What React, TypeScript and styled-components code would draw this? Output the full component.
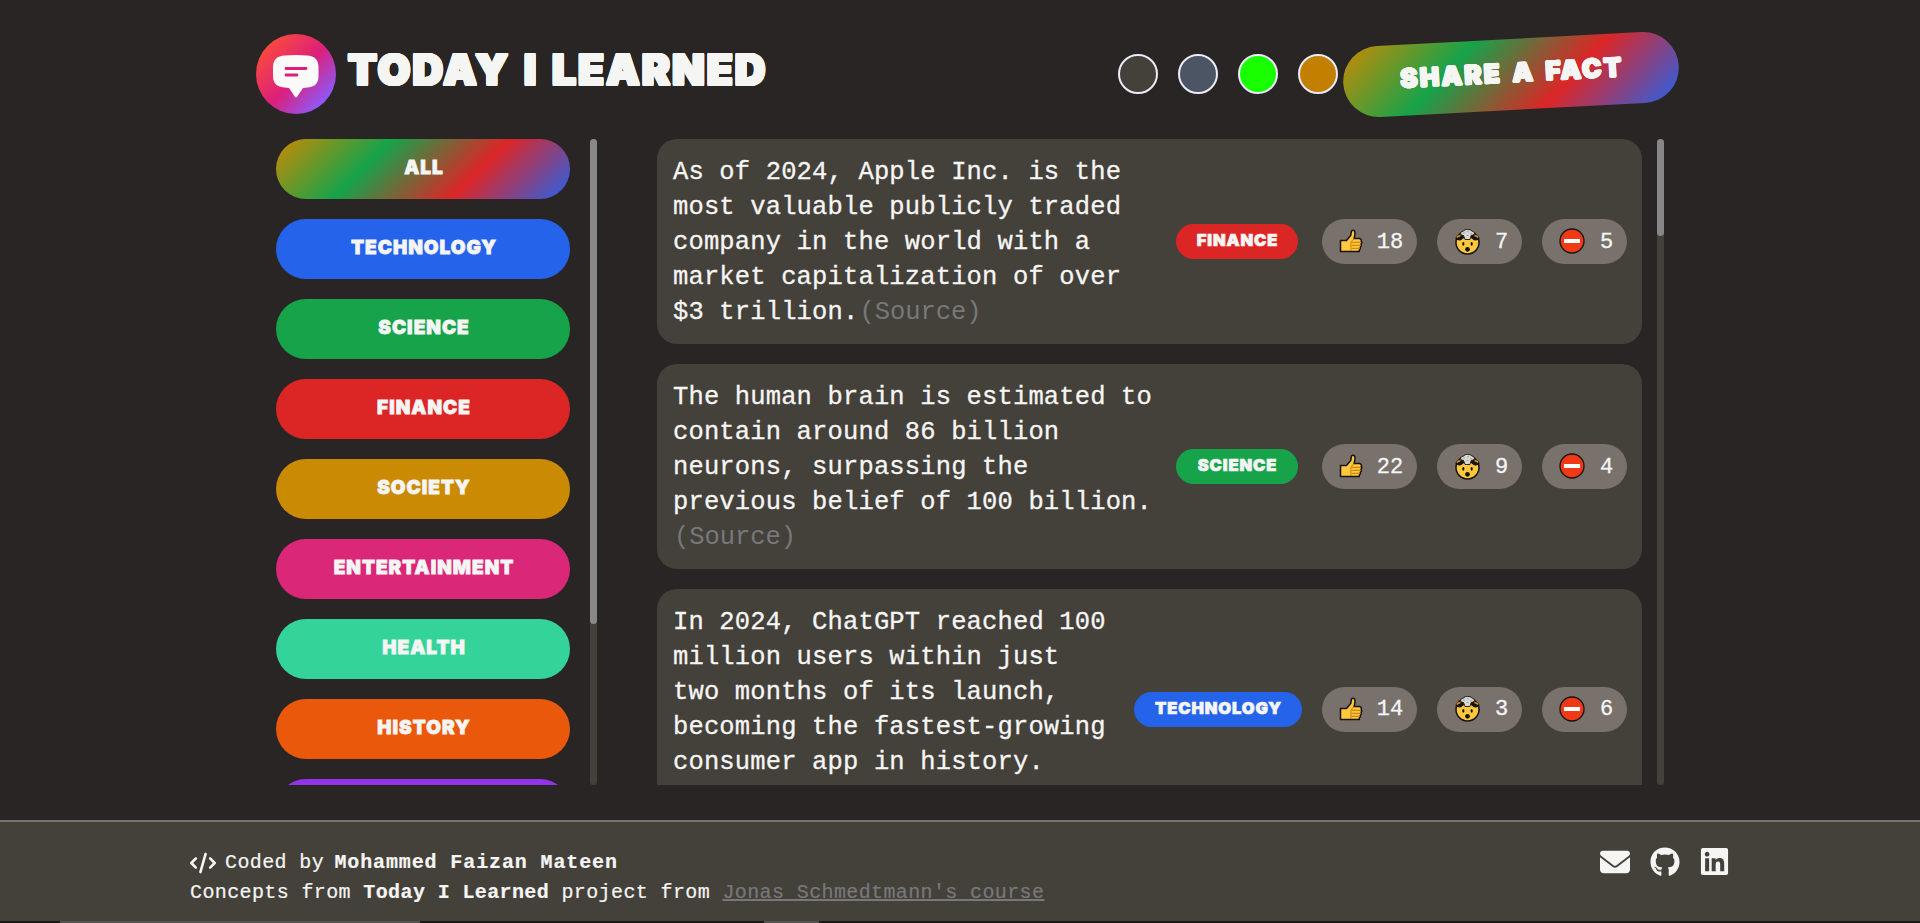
import React from 'react';
import styled, { createGlobalStyle, css } from 'styled-components';
import { FaEnvelope, FaGithub, FaLinkedin, FaCode } from 'react-icons/fa6';

const rainbow = 'linear-gradient(135deg, #ca8a04, #16a34a 33%, #dc2626 66%, #2563eb)';

const GlobalStyle = createGlobalStyle`
  * { box-sizing: border-box; margin: 0; padding: 0; }
  body {
    background: #292524;
    color: #f5f5f4;
    font-family: 'Liberation Mono', monospace;
    overflow: hidden;
  }
  button { border: 0; color: inherit; font: inherit; }
`;

/* Rounded outline that fattens the display lettering. */
const fatten = (r: number) =>
  Array.from({ length: 16 }, (_, i) => {
    const a = (i * Math.PI) / 8;
    return `${(r * Math.cos(a)).toFixed(2)}px ${(r * Math.sin(a)).toFixed(2)}px 0 #f5f5f4`;
  }).join(', ');

const display = css`
  font-family: Inter, 'Liberation Sans', sans-serif;
  font-weight: 900;
  text-transform: uppercase;
  white-space: nowrap;
`;

const Page = styled.div`
  height: 923px;
  display: flex;
  flex-direction: column;
`;

const Header = styled.header`
  height: 139px;
  padding: 34px 241px 0 256px;
  display: flex;
  align-items: flex-start;
  justify-content: space-between;
`;

const Brand = styled.div`
  display: flex;
  gap: 12px;
`;

const Title = styled.h1`
  ${display}
  width: 421px;
  font-size: 42px;
  line-height: 71px;
  letter-spacing: 2.3px;
  word-spacing: 3px;
  text-shadow: ${fatten(1.4)};
`;

const Actions = styled.div`
  height: 80px;
  display: flex;
  align-items: center;
`;

const Swatch = styled.button<{ $color: string }>`
  width: 40px;
  height: 40px;
  margin-right: 20px;
  border: 2px solid #ececf8;
  border-radius: 50%;
  background: ${(p) => p.$color};
  &:last-of-type { margin-right: 0; }
`;

const Swatches = styled.div`
  display: flex;
  margin-right: 5px;
`;

const ShareButton = styled.button`
  ${display}
  width: 336px;
  height: 71px;
  padding: 0 0 5px 2px;
  border-radius: 36px;
  background: ${rainbow};
  font-size: 26px;
  letter-spacing: 2.2px;
  word-spacing: 3px;
  text-shadow: ${fatten(0.8)};
  transform: rotate(-3deg);
`;

const Main = styled.main`
  height: 646px;
  display: flex;
`;

const Sidebar = styled.aside`
  width: 321px;
  margin-left: 276px;
  display: flex;
  justify-content: space-between;
`;

const CategoryList = styled.ul`
  width: 294px;
  display: flex;
  flex-direction: column;
  gap: 20px;
  overflow: hidden;
  list-style: none;
`;

const CategoryButton = styled.button<{ $color: string }>`
  ${display}
  display: block;
  width: 294px;
  height: 60px;
  padding: 0 0 4px 2px;
  border-radius: 30px;
  background: ${(p) => p.$color};
  font-size: 19px;
  letter-spacing: 1px;
  -webkit-text-stroke: 0.8px #f5f5f4;
`;

const Track = styled.div`
  width: 7px;
  height: 646px;
  border-radius: 4px;
  background: #44403a;
`;

const Thumb = styled.div<{ $height: number }>`
  height: ${(p) => p.$height}px;
  border-radius: 4px;
  background: #888;
`;

const Feed = styled.section`
  width: 1007px;
  margin-left: 60px;
  display: flex;
  justify-content: space-between;
`;

const FactList = styled.ul`
  width: 985px;
  display: flex;
  flex-direction: column;
  gap: 20px;
  overflow: hidden;
  list-style: none;
`;

const FactCard = styled.li`
  flex: none;
  padding: 15px 15px 15px 16px;
  display: flex;
  align-items: center;
  border-radius: 20px;
  background: #44403a;
`;

const FactText = styled.p`
  flex: 1;
  margin: 1px 0 -1px;
  font-size: 25.5px;
  line-height: 35px;
  letter-spacing: 0.15px;
  white-space: pre;
  -webkit-text-stroke: 0.3px #f5f5f4;
`;

const Source = styled.a`
  margin-left: 1px;
  color: #78787a;
  letter-spacing: -0.05px;
  -webkit-text-stroke: 0;
`;

const Tag = styled.span<{ $color: string; $wide: boolean }>`
  ${display}
  width: ${(p) => (p.$wide ? 168 : 122)}px;
  height: 35px;
  margin-right: ${(p) => (p.$wide ? 20 : 24)}px;
  padding-left: 1px;
  border-radius: 18px;
  background: ${(p) => p.$color};
  font-size: 16.5px;
  letter-spacing: 0.9px;
  line-height: 32px;
  text-align: center;
  -webkit-text-stroke: 0.7px #f5f5f4;
`;

const Votes = styled.div`
  display: flex;
  gap: 20px;
`;

const VoteButton = styled.button<{ $wide?: boolean }>`
  width: ${(p) => (p.$wide ? 95 : 85)}px;
  height: 45px;
  padding: 1px 14px 0 17px;
  display: flex;
  align-items: center;
  justify-content: space-between;
  border-radius: 23px;
  background: #78716c;
  font-size: 22px;
  letter-spacing: -0.1px;
  -webkit-text-stroke: 0.3px #f5f5f4;
  svg { margin-top: -2px; }
`;

const Footer = styled.footer`
  height: 101px;
  margin-top: 35px;
  padding: 25px 190px 0 190px;
  display: flex;
  justify-content: space-between;
  border-top: 2px solid #78716c;
  background: #44403a;
`;

const Credits = styled.div`
  padding-top: 1px;
  font-size: 20px;
  line-height: 30px;
  letter-spacing: 0.38px;
  white-space: pre;
  -webkit-text-stroke: 0.2px;
`;

const CreditLine = styled.p`
  display: flex;
  align-items: center;
  svg { margin-right: 9px; }
`;

const Author = styled.b`
  margin-left: -2px;
  letter-spacing: 0.88px;
`;

const CourseLink = styled.a`
  color: #78787a;
  text-decoration: underline;
`;

const Socials = styled.nav`
  height: 29px;
  display: flex;
  align-items: center;
  gap: 19.5px;
`;

const Taskbar = styled.div`
  height: 2px;
  display: flex;
  background: #1c1a19;
`;

const TaskbarItem = styled.span<{ $offset: number; $width: number }>`
  margin-left: ${(p) => p.$offset}px;
  width: ${(p) => p.$width}px;
  background: #55524f;
`;

const Logo = () => (
  <svg width="80" height="80" viewBox="0 0 80 80">
    <defs>
      <linearGradient id="logo" x1="0.1" y1="0.15" x2="0.87" y2="0.87">
        <stop offset="0" stopColor="#fb4b3c" />
        <stop offset="0.53" stopColor="#dc1f7b" />
        <stop offset="1" stopColor="#8b5cff" />
      </linearGradient>
    </defs>
    <circle cx="40" cy="40" r="40" fill="url(#logo)" />
    <path d="M29 21.5Q40 20.5 51 21.5Q62.500 22 62.500 33V42Q62.500 53 51 53.500L47 54L41.300 62.500Q40 64.500 38.700 62.500L33 54L29 53.500Q17 53 17 42V33Q17 22 29 21.500Z" fill="#fafaf9" />
    <path d="M30 34.500H50M30 41H41" stroke="#dc1f7b" strokeWidth="2.8" strokeLinecap="round" />
  </svg>
);

const ThumbsUp = () => (
  <svg width="24" height="26" viewBox="0 0 24 26">
    <path d="M1.500 12.500H7.500L11.700 7.500L12.500 3Q14 1.200 15.700 3.200Q16.500 5.500 15 10.500H20.500Q22.700 11 22.200 13.200Q23.400 14.800 22 16.300Q22.800 18 21.300 19.300Q21.600 21 20.300 22V23.500H1.500Z" fill="#ffc83d" stroke="#171310" strokeWidth="1.5" strokeLinejoin="round" />
    <path d="M12 23V14L15 10.500M13 14.300H22M13 17.300H22M13 20.300H21" fill="none" stroke="#c27a0c" strokeWidth="1" />
  </svg>
);

const MindBlown = () => (
  <svg width="27" height="27" viewBox="0 0 27 27">
    <circle cx="13.500" cy="14.500" r="11.500" fill="#ffc83d" stroke="#171310" strokeWidth="1.500" />
    <path d="M1.500 10.500Q1.500 7.500 6 6.500H21Q25.500 7.500 25.500 10.500Q24 12.800 20 12.300L17 10H10L7 12.300Q3 12.800 1.500 10.500Z" fill="#171310" />
    <path d="M2.800 9.500Q4 8 6.500 7.500M20.500 7.500Q23 8 24.200 9.500" fill="none" stroke="#e09412" strokeWidth="1.500" />
    <path d="M9.500 7.500Q6 7.500 6.500 5Q7.500 3 9.500 3Q11 1.200 13.500 1.400Q16.500 1.200 18 3Q20.300 3.300 20.500 5.300Q20 7.500 17.200 7.500L16 11.500H11Z" fill="#d8d8d6" stroke="#171310" strokeWidth="0.9" />
    <path d="M9 5H11M13 3.800H15M16 5.800H18M12.500 7.500H14.500" stroke="#969694" strokeWidth="0.9" />
    <ellipse cx="9.300" cy="15.800" rx="1.100" ry="1.900" fill="#171310" />
    <ellipse cx="17.700" cy="15.800" rx="1.100" ry="1.900" fill="#171310" />
    <circle cx="13.500" cy="21.300" r="2.400" fill="#171310" />
  </svg>
);

const NoEntry = () => (
  <svg width="26" height="26" viewBox="0 0 26 26">
    <circle cx="13" cy="13" r="12" fill="#f03a17" stroke="#171310" strokeWidth="1.300" />
    <rect x="5" y="11" width="16" height="4" fill="#fff" />
  </svg>
);

const colors = {
  technology: '#2563eb',
  science: '#16a34a',
  finance: '#dc2626',
};

const categories = [
  { name: 'All', color: rainbow },
  { name: 'Technology', color: colors.technology },
  { name: 'Science', color: colors.science },
  { name: 'Finance', color: colors.finance },
  { name: 'Society', color: '#ca8a04' },
  { name: 'Entertainment', color: '#db2777' },
  { name: 'Health', color: '#34d399' },
  { name: 'History', color: '#ea580c' },
  { name: '', color: '#9333ea' },
];

const facts: { text: string; category: keyof typeof colors; votes: number[]; source: string }[] = [
  {
    text: 'As of 2024, Apple Inc. is the\nmost valuable publicly traded\ncompany in the world with a\nmarket capitalization of over\n$3 trillion.',
    category: 'finance',
    votes: [18, 7, 5],
    source: '(Source)',
  },
  {
    text: 'The human brain is estimated to\ncontain around 86 billion\nneurons, surpassing the\nprevious belief of 100 billion.\n',
    category: 'science',
    votes: [22, 9, 4],
    source: '(Source)',
  },
  {
    text: 'In 2024, ChatGPT reached 100\nmillion users within just\ntwo months of its launch,\nbecoming the fastest-growing\nconsumer app in history.\n',
    category: 'technology',
    votes: [14, 3, 6],
    source: '\u00a0',
  },
];

export default function App() {
  return (
    <Page>
      <GlobalStyle />
      <Header>
        <Brand>
          <Logo />
          <Title>Today I Learned</Title>
        </Brand>
        <Actions>
          <Swatches>
            {['#44403a', '#4b5563', '#1aff00', '#c27f00'].map((c) => (
              <Swatch key={c} $color={c} />
            ))}
          </Swatches>
          <ShareButton>Share a fact</ShareButton>
        </Actions>
      </Header>
      <Main>
        <Sidebar>
          <CategoryList>
            {categories.map((c) => (
              <li key={c.color}>
                <CategoryButton $color={c.color}>{c.name}</CategoryButton>
              </li>
            ))}
          </CategoryList>
          <Track>
            <Thumb $height={485} />
          </Track>
        </Sidebar>
        <Feed>
          <FactList>
            {facts.map((f) => (
              <FactCard key={f.category}>
                <FactText>
                  {f.text}
                  <Source>{f.source}</Source>
                </FactText>
                <Tag $color={colors[f.category]} $wide={f.category === 'technology'}>
                  {f.category}
                </Tag>
                <Votes>
                  <VoteButton $wide><ThumbsUp />{f.votes[0]}</VoteButton>
                  <VoteButton><MindBlown />{f.votes[1]}</VoteButton>
                  <VoteButton><NoEntry />{f.votes[2]}</VoteButton>
                </Votes>
              </FactCard>
            ))}
          </FactList>
          <Track>
            <Thumb $height={97} />
          </Track>
        </Feed>
      </Main>
      <Footer>
        <Credits>
          <CreditLine>
            <FaCode size={26} />Coded by <Author>Mohammed Faizan Mateen</Author>
          </CreditLine>
          <p>
            Concepts from <b>Today I Learned</b> project from <CourseLink>Jonas Schmedtmann's course</CourseLink>
          </p>
        </Credits>
        <Socials>
          <FaEnvelope size={30} />
          <FaGithub size={30} />
          <FaLinkedin size={31} />
        </Socials>
      </Footer>
      <Taskbar>
        <TaskbarItem $offset={60} $width={360} />
        <TaskbarItem $offset={344} $width={55} />
      </Taskbar>
    </Page>
  );
}
